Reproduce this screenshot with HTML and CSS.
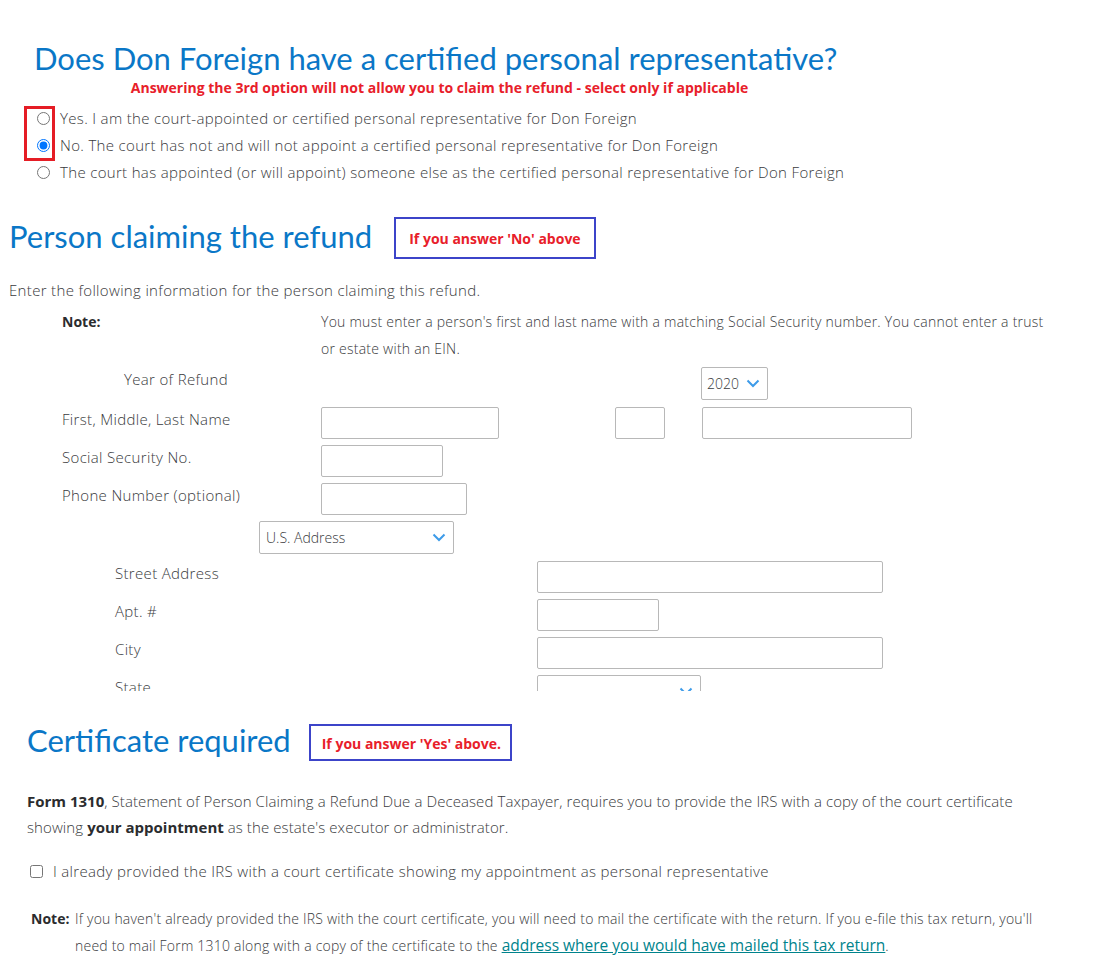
FILE: index.html
```html
<!DOCTYPE html>
<html lang="en">
<head>
  <meta charset="UTF-8" />
  <meta name="viewport" content="width=device-width, initial-scale=1" />
  <title>Personal representative</title>
  <link rel="stylesheet" href="styles.css">
</head>
<body>

  <section class="rep">
    <h1 class="title">Does Don Foreign have a certified personal representative?</h1>
    <p class="warn">Answering the 3rd option will not allow you to claim the refund - select only if applicable</p>

    <div class="choices">
      <span class="choice-frame"></span>
      <label class="choice"><input type="radio" name="rep"> Yes. I am the court-appointed or certified personal representative for Don Foreign</label>
      <label class="choice"><input type="radio" name="rep" checked> No. The court has not and will not appoint a certified personal representative for Don Foreign</label>
      <label class="choice"><input type="radio" name="rep"> The court has appointed (or will appoint) someone else as the certified personal representative for Don Foreign</label>
    </div>
  </section>

  <section class="claimant">
    <div class="head-row">
      <h2 class="subtitle">Person claiming the refund</h2>
      <div class="callout callout-no">If you answer 'No' above</div>
    </div>

    <p class="intro">Enter the following information for the person claiming this refund.</p>

    <div class="form">
      <div class="note-row">
        <strong class="note-label">Note:</strong>
        <p class="note-text">You must enter a person's first and last name with a matching Social Security number. You cannot enter a trust or estate with an EIN.</p>
      </div>

      <div class="row row-year">
        <span class="row-label">Year of Refund</span>
        <div class="select select-year"><span>2020</span>
          <svg width="14" height="9" viewBox="0 0 14 9"><path d="M1.5 1.5 L7 7 L12.5 1.5" fill="none" stroke="#3d9be9" stroke-width="2"/></svg>
        </div>
      </div>

      <div class="row">
        <span class="row-label">First, Middle, Last Name</span>
        <input class="box w-first" type="text">
        <input class="box w-mid" type="text">
        <input class="box w-last" type="text">
      </div>

      <div class="row">
        <span class="row-label">Social Security No.</span>
        <input class="box w-ssn" type="text">
      </div>

      <div class="row">
        <span class="row-label">Phone Number (optional)</span>
        <input class="box w-phone" type="text">
      </div>

      <div class="row row-country">
        <div class="select select-country"><span>U.S. Address</span>
          <svg width="14" height="9" viewBox="0 0 14 9"><path d="M1.5 1.5 L7 7 L12.5 1.5" fill="none" stroke="#3d9be9" stroke-width="2"/></svg>
        </div>
      </div>

      <div class="row addr">
        <span class="row-label">Street Address</span>
        <input class="box w-wide" type="text">
      </div>
      <div class="row addr">
        <span class="row-label">Apt. #</span>
        <input class="box w-apt" type="text">
      </div>
      <div class="row addr">
        <span class="row-label">City</span>
        <input class="box w-wide" type="text">
      </div>
      <div class="row addr">
        <span class="row-label">State</span>
        <div class="select select-state"><span></span>
          <svg width="14" height="9" viewBox="0 0 14 9"><path d="M1.5 1.5 L7 7 L12.5 1.5" fill="none" stroke="#3d9be9" stroke-width="2"/></svg>
        </div>
      </div>
    </div>
  </section>

  <section class="cert">
    <div class="head-row">
      <h2 class="subtitle">Certificate required</h2>
      <div class="callout callout-yes">If you answer 'Yes' above.</div>
    </div>

    <p class="cert-text"><strong>Form 1310</strong>, Statement of Person Claiming a Refund Due a Deceased Taxpayer, requires you to provide the IRS with a copy of the court certificate showing <strong>your appointment</strong> as the estate's executor or administrator.</p>

    <label class="check"><input type="checkbox"> I already provided the IRS with a court certificate showing my appointment as personal representative</label>

    <div class="cert-note">
      <strong class="cert-note-label">Note:</strong>
      <p class="cert-note-text">If you haven't already provided the IRS with the court certificate, you will need to mail the certificate with the return. If you e-file this tax return, you'll need to mail Form 1310 along with a copy of the certificate to the <a href="#">address where you would have mailed this tax return</a>.</p>
    </div>
  </section>

</body>
</html>
```

FILE: styles.css
```css
* {
  box-sizing: border-box;
  margin: 0;
  padding: 0;
}

body {
  font-family: 'Open Sans', 'Lato', sans-serif;
  font-weight: 300;
  font-size: 15px;
  color: #393a3d;
  background: #fff;
  width: 1109px;
}

strong {
  font-weight: 700;
  color: #2b2c2e;
  letter-spacing: 0;
}

/* Section 1 */
.rep {
  padding: 40px 0 0 34px;
}

.title {
  font-family: 'Lato', sans-serif;
  font-size: 31px;
  line-height: 36px;
  font-weight: 400;
  color: #0a77c7;
  width: 811px;
}

.warn {
  width: 811px;
  text-align: center;
  font-size: 14px;
  font-weight: 700;
  line-height: 20px;
  color: #e8202a;
  margin-top: 2px;
}

.choices {
  position: relative;
  margin: 7px 0 0 3px;
}

.choice-frame {
  position: absolute;
  left: -13px;
  top: 1px;
  width: 31px;
  height: 55px;
  border: 3px solid #e51d25;
}

.choice {
  display: flex;
  align-items: center;
  gap: 10px;
  line-height: 27px;
  letter-spacing: 0.33px;
}

.choice input {
  margin: 0;
  width: 13px;
  height: 13px;
}

/* Section 2 */
.claimant {
  padding-left: 9px;
  margin-top: 31px;
  height: 474px;
  overflow: hidden;
}

.head-row {
  display: flex;
  align-items: center;
  gap: 22px;
}

.subtitle {
  font-family: 'Lato', sans-serif;
  font-size: 31px;
  line-height: 36px;
  font-weight: 400;
  color: #0a77c7;
  margin-bottom: 4px;
}

.callout {
  border: 2px solid #3c44c9;
  font-size: 14px;
  font-weight: 700;
  color: #e8202a;
  padding: 11px 0 0 13px;
  line-height: 18px;
}

.callout-no {
  width: 202px;
  height: 42px;
}

.callout-yes {
  width: 203px;
  height: 37px;
  padding: 9px 0 0 11px;
}

.intro {
  line-height: 24px;
  margin-top: 19px;
  letter-spacing: 0.33px;
}

.form {
  padding-left: 53px;
  margin-top: 6px;
}

.note-row {
  display: flex;
  line-height: 27px;
  font-size: 14px;
}

.note-label {
  width: 259px;
  flex-shrink: 0;
}

.note-text {
  width: 724px;
  letter-spacing: 0.25px;
}

.row {
  display: flex;
  align-items: flex-start;
  margin-bottom: 6px;
}

.row-year {
  margin-top: 5px;
  margin-bottom: 7px;
}

.row-label {
  width: 259px;
  flex-shrink: 0;
  line-height: 22px;
  padding-top: 1px;
  letter-spacing: 0.33px;
}

.row-year .row-label {
  width: 380px;
  padding-left: 62px;
  margin-right: 259px;
}

.box {
  height: 32px;
  border: 1px solid #b8b8b8;
  border-radius: 2px;
  background: #fff;
}

.w-first { width: 178px; }
.w-mid   { width: 50px; margin-left: 116px; }
.w-last  { width: 210px; margin-left: 37px; }
.w-ssn   { width: 122px; }
.w-phone { width: 146px; }
.w-wide  { width: 346px; }
.w-apt   { width: 122px; }

.select {
  display: flex;
  align-items: center;
  justify-content: space-between;
  height: 33px;
  border: 1px solid #b8b8b8;
  border-radius: 2px;
  padding: 0 7px 0 5px;
  font-size: 14px;
  color: #393a3d;
}

.select-year {
  width: 67px;
}

.row-country {
  padding-left: 197px;
  margin-bottom: 7px;
}

.select-country {
  width: 195px;
  padding-left: 6px;
}

.select-state {
  width: 164px;
}

.addr .row-label {
  width: 475px;
  padding-left: 53px;
}

/* Section 3 */
.cert {
  padding-left: 27px;
  margin-top: 31px;
}

.cert .head-row {
  gap: 18px;
}

.cert-text {
  line-height: 26px;
  margin-top: 26px;
  width: 1020px;
  letter-spacing: 0.09px;
}

.check {
  display: flex;
  align-items: center;
  gap: 10px;
  line-height: 26px;
  margin: 18px 0 0 3px;
  letter-spacing: 0.33px;
}

.check input {
  margin: 0;
  width: 13px;
  height: 13px;
}

.cert-note {
  display: flex;
  margin: 22px 0 0 4px;
  line-height: 26px;
  font-size: 14px;
}

.cert-note-label {
  width: 44px;
  flex-shrink: 0;
}

.cert-note-text {
  width: 970px;
  letter-spacing: 0.21px;
}

.cert-note-text a {
  color: #00838c;
  font-size: 15.5px;
  font-weight: 400;
  letter-spacing: 0;
}
```
